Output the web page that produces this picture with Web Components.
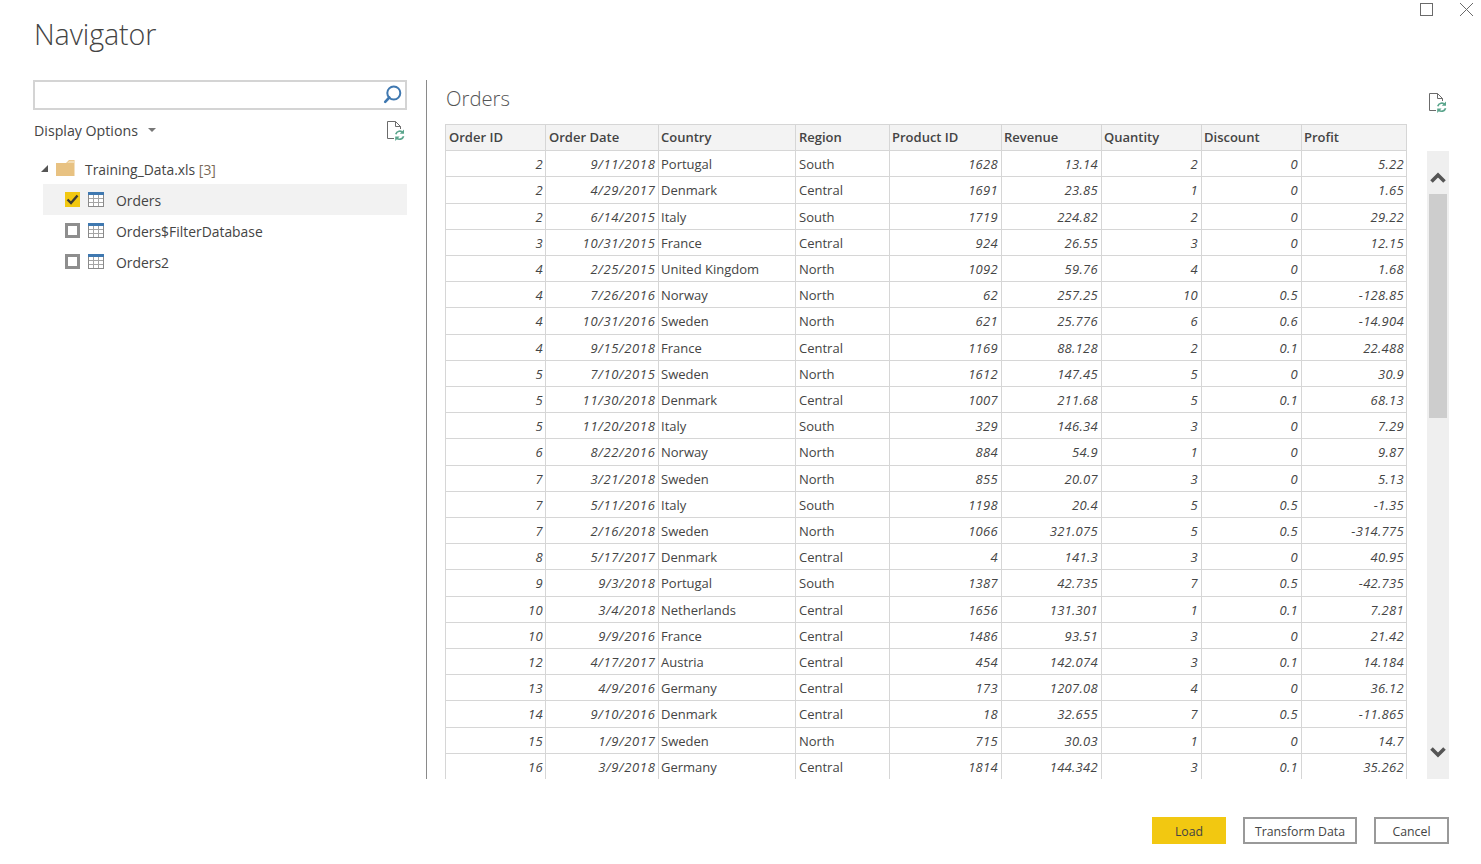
<!DOCTYPE html>
<html>
<head>
<meta charset="utf-8">
<title>Navigator</title>
<style>
html,body{margin:0;padding:0;background:#fff;}
body{font-family:"Open Sans","Noto Sans","Liberation Sans",sans-serif;color:#3b3b3b;height:864px;overflow:hidden;}
</style>
</head>
<body>
<nav-dialog heading="Navigator">
  <nav-side slot="side">
    <nav-item kind="folder" level="0">Training_Data.xls <span style="color:#7a6a58">[3]</span></nav-item>
    <nav-item kind="table" checked selected>Orders</nav-item>
    <nav-item kind="table">Orders$FilterDatabase</nav-item>
    <nav-item kind="table">Orders2</nav-item>
  </nav-side>
  <nav-preview slot="main" heading="Orders"></nav-preview>
  <nav-button slot="footer" primary style="width:74px">Load</nav-button>
  <nav-button slot="footer" style="width:114px">Transform Data</nav-button>
  <nav-button slot="footer" style="width:75px">Cancel</nav-button>
</nav-dialog>

<script>
const refreshIcon = `<svg width="20" height="22" viewBox="0 0 20 22" fill="none">
  <path d="M9.5 .5H1.5V17.5H8M9.5 .5L14.5 5.5V8M9.5 .5V5.5H14.5" stroke="#6b6b6b" stroke-width="1"/>
  <path d="M9.8 13.2A4.2 4.2 0 0 1 17 11.6M17.6 15.2A4.2 4.2 0 0 1 10.6 17" stroke="#5aa58c" stroke-width="1.7"/>
  <path d="M18 8.6V12.8H13.8ZM9.2 20V15.6H13.6Z" fill="#5aa58c"/>
</svg>`;

class NavDialog extends HTMLElement {
    constructor() {
        super();
        this.attachShadow({mode:'open'});
        this.shadowRoot.innerHTML = `
<style>
:host{display:block;width:1481px;height:864px;box-sizing:border-box;}
.controls{display:flex;justify-content:flex-end;gap:25px;height:14px;padding:3px 7px 0 0;}
.controls svg{display:block;}
h1{font-size:28.7px;font-weight:300;line-height:34px;margin:0;padding:0 0 0 34px;height:63px;color:#444;letter-spacing:-.1px;}
.body{display:flex;height:699px;}
.side{width:426px;flex:none;box-sizing:border-box;padding-left:33px;}
.rule{width:1px;background:#8a8a8a;flex:none;}
.main{flex:1;min-width:0;}
.foot{display:flex;justify-content:flex-end;gap:17px;padding:38px 32px 0 0;}
</style>
<div class="controls">
  <svg width="14" height="14" viewBox="0 0 14 14" fill="none"><rect x=".5" y=".5" width="12" height="12" stroke="#6a6a6a"/></svg>
  <svg width="15" height="14" viewBox="0 0 15 14" fill="none"><path d="M1 0L14 13M14 0L1 13" stroke="#6a6a6a"/></svg>
</div>
<h1></h1>
<div class="body">
  <div class="side"><slot name="side"></slot></div>
  <div class="rule"></div>
  <div class="main"><slot name="main"></slot></div>
</div>
<div class="foot"><slot name="footer"></slot></div>`;
        this.shadowRoot.querySelector('h1').textContent = this.getAttribute('heading');
    }
}

class NavSide extends HTMLElement {
    constructor() {
        super();
        this.attachShadow({mode:'open'});
        this.shadowRoot.innerHTML = `
<style>
:host{display:block;font-size:13.9px;color:#444;}
.search{display:flex;justify-content:flex-end;align-items:center;box-sizing:border-box;width:374px;height:30px;border:2px solid #d4d4d4;padding-right:2px;}
.search svg{display:block;}
.opts{display:flex;align-items:center;justify-content:space-between;width:374px;height:42px;box-sizing:border-box;padding-right:1px;font-size:14.2px;}
.opts span{display:flex;align-items:center;gap:10px;margin:-2px 0 0 1px;}
.caret{width:0;height:0;border:4px solid transparent;border-top:4px solid #777;border-bottom:0;}
.opts svg{display:block;margin-top:1px;}
.tree{margin-top:1px;width:374px;}
</style>
<div class="search">
  <svg width="22" height="22" viewBox="0 0 22 22" fill="none">
    <circle cx="12.8" cy="9" r="6.500" stroke="#3f78b0" stroke-width="2"/>
    <path d="M8.300 13.500L4.200 17.800" stroke="#3f78b0" stroke-width="2.600" stroke-linecap="round"/>
  </svg>
</div>
<div class="opts"><span>Display Options <i class="caret"></i></span>${refreshIcon}</div>
<div class="tree"><slot></slot></div>`;
    }
}

class NavItem extends HTMLElement {
    constructor() {
        super();
        this.attachShadow({mode:'open'});
        const folder = this.getAttribute('kind') === 'folder';
        const checked = this.hasAttribute('checked');
        const lead = folder ? `
  <i class="arrow"></i>
  <svg class="folder" width="19" height="16" viewBox="0 0 19 16"><path d="M0 3H10L13 0H18.500V16H0Z" fill="#e8c282"/><path d="M11 3L13.500 .8H18V3Z" fill="#f2dcb4"/></svg>`
        : `
  <span class="box ${checked ? 'on' : ''}">${checked ? '<svg width="15" height="15" viewBox="0 0 15 15" fill="none"><path d="M2.500 7.500L6 11L12.500 3.500" stroke="#3d3a30" stroke-width="2.400"/></svg>' : ''}</span>
  <svg class="grid" width="16" height="15" viewBox="0 0 16 15" fill="none">
    <rect x=".5" y=".5" width="15" height="14" fill="#fff" stroke="#8a8a8a"/>
    <path d="M0 1.500H16" stroke="#3f78b0" stroke-width="3"/>
    <path d="M5.500 3V14M10.500 3V14M1 6.500H15M1 10.500H15" stroke="#a5a5a5"/>
  </svg>`;
        this.shadowRoot.innerHTML = `
<style>
:host{display:block;}
.row{display:flex;align-items:center;height:31px;padding-left:${folder ? '0' : '22px'};margin-left:10px;}
:host([selected]) .row{background:#f2f2f2;}
.arrow{width:0;height:0;border-style:solid;border-width:0 0 7px 7px;border-color:transparent transparent #555 transparent;margin:0 8px 0 -2px;}
.folder{margin:-1px 10px 0 0;display:block;}
.box{display:flex;align-items:center;justify-content:center;width:15px;height:15px;box-sizing:border-box;border:3px solid #8e8e8e;background:#fff;}
.box.on{border:0;background:#f2c811;}
.grid{margin:0 12px 0 8px;display:block;}
.label{margin-top:${folder ? '1px' : '2px'};}
</style>
<div class="row">${lead}<span class="label"><slot></slot></span></div>`;
    }
}

const HEADERS = ['Order ID','Order Date','Country','Region','Product ID','Revenue','Quantity','Discount','Profit'];
const ROWS = [
['2','9/11/2018','Portugal','South','1628','13.14','2','0','5.22'],
['2','4/29/2017','Denmark','Central','1691','23.85','1','0','1.65'],
['2','6/14/2015','Italy','South','1719','224.82','2','0','29.22'],
['3','10/31/2015','France','Central','924','26.55','3','0','12.15'],
['4','2/25/2015','United Kingdom','North','1092','59.76','4','0','1.68'],
['4','7/26/2016','Norway','North','62','257.25','10','0.5','-128.85'],
['4','10/31/2016','Sweden','North','621','25.776','6','0.6','-14.904'],
['4','9/15/2018','France','Central','1169','88.128','2','0.1','22.488'],
['5','7/10/2015','Sweden','North','1612','147.45','5','0','30.9'],
['5','11/30/2018','Denmark','Central','1007','211.68','5','0.1','68.13'],
['5','11/20/2018','Italy','South','329','146.34','3','0','7.29'],
['6','8/22/2016','Norway','North','884','54.9','1','0','9.87'],
['7','3/21/2018','Sweden','North','855','20.07','3','0','5.13'],
['7','5/11/2016','Italy','South','1198','20.4','5','0.5','-1.35'],
['7','2/16/2018','Sweden','North','1066','321.075','5','0.5','-314.775'],
['8','5/17/2017','Denmark','Central','4','141.3','3','0','40.95'],
['9','9/3/2018','Portugal','South','1387','42.735','7','0.5','-42.735'],
['10','3/4/2018','Netherlands','Central','1656','131.301','1','0.1','7.281'],
['10','9/9/2016','France','Central','1486','93.51','3','0','21.42'],
['12','4/17/2017','Austria','Central','454','142.074','3','0.1','14.184'],
['13','4/9/2016','Germany','Central','173','1207.08','4','0','36.12'],
['14','9/10/2016','Denmark','Central','18','32.655','7','0.5','-11.865'],
['15','1/9/2017','Sweden','North','715','30.03','1','0','14.7'],
['16','3/9/2018','Germany','Central','1814','144.342','3','0.1','35.262']
];

// columns whose text sits a pixel further left in the reference
const TIGHT = [2,4,5,6,7,8];

class NavPreview extends HTMLElement {
    constructor() {
        super();
        this.attachShadow({mode:'open'});
        const head = HEADERS.map((h,i) => `<div class="th ${TIGHT.includes(i) ? 'tight' : ''}">${h}</div>`).join('');
        const body = ROWS.map(r => r.map((v,i) => {
            const cls = i===2 ? 'txt' : (i===3 ? '' : 'num');
            const extra = i===1 ? 'date' : (i===0||i===8 ? 'edge' : '');
            return `<div class="td ${cls} ${extra}">${v}</div>`;
        }).join('')).join('');
        this.shadowRoot.innerHTML = `
<style>
:host{display:block;height:699px;box-sizing:border-box;padding-left:18px;font-size:13px;color:#444;}
.top{display:flex;justify-content:space-between;align-items:flex-start;height:44px;width:1003px;}
h2{font-size:20.3px;font-weight:300;margin:0;line-height:36px;color:#555;padding-left:1px;}
.top svg{display:block;margin-top:13px;}
.content{display:flex;justify-content:space-between;width:1004px;}
.clip{height:655px;overflow:hidden;width:962px;}
.grid{display:grid;grid-template-columns:100px 113px 137px 94px 112px 100px 100px 100px 105px;grid-auto-rows:26.204px;border-left:1px solid #d6d6d6;border-top:1px solid #d6d6d6;box-sizing:border-box;}
.th,.td{border-right:1px solid #d6d6d6;border-bottom:1px solid #d6d6d6;padding:0 3px;line-height:26px;white-space:nowrap;overflow:hidden;}
.td.txt{padding-left:2px;}
.th.tight{padding-left:2px;}
.th{background:#f3f3f3;font-weight:600;line-height:24px;}
.num{text-align:right;font-style:italic;letter-spacing:.3px;}
.num.date{letter-spacing:.65px;padding-right:2.500px;}
.num.edge{padding-right:2px;}
.bar{width:22px;height:628px;margin-top:27px;background:#efefef;display:flex;flex-direction:column;align-items:center;box-sizing:border-box;}
.bar svg{display:block;flex:none;}
.up{margin-top:21px;}
.thumb{width:18px;height:224px;background:#cdcdcd;margin-top:11px;flex:none;}
.down{margin-top:auto;margin-bottom:21px;}
</style>
<div class="top"><h2>${this.getAttribute('heading')}</h2>${refreshIcon}</div>
<div class="content">
  <div class="clip"><div class="grid">${head}${body}</div></div>
  <div class="bar">
    <svg class="up" width="16" height="11" viewBox="0 0 16 11" fill="none"><path d="M1.500 9.500L8 3L14.500 9.500" stroke="#555" stroke-width="3.600"/></svg>
    <div class="thumb"></div>
    <svg class="down" width="16" height="11" viewBox="0 0 16 11" fill="none"><path d="M1.500 1.500L8 8L14.500 1.500" stroke="#555" stroke-width="3.600"/></svg>
  </div>
</div>`;
    }
}

class NavButton extends HTMLElement {
    constructor() {
        super();
        this.attachShadow({mode:'open'});
        this.shadowRoot.innerHTML = `
<style>
:host{display:flex;align-items:center;justify-content:center;box-sizing:border-box;height:27px;border:2px solid #999;padding-top:1px;font-size:12.3px;color:#444;background:#fff;}
:host([primary]){background:#f2c811;border-color:#f2c811;}
</style>
<slot></slot>`;
    }
}

customElements.define('nav-dialog', NavDialog);
customElements.define('nav-side', NavSide);
customElements.define('nav-item', NavItem);
customElements.define('nav-preview', NavPreview);
customElements.define('nav-button', NavButton);
</script>
</body>
</html>
